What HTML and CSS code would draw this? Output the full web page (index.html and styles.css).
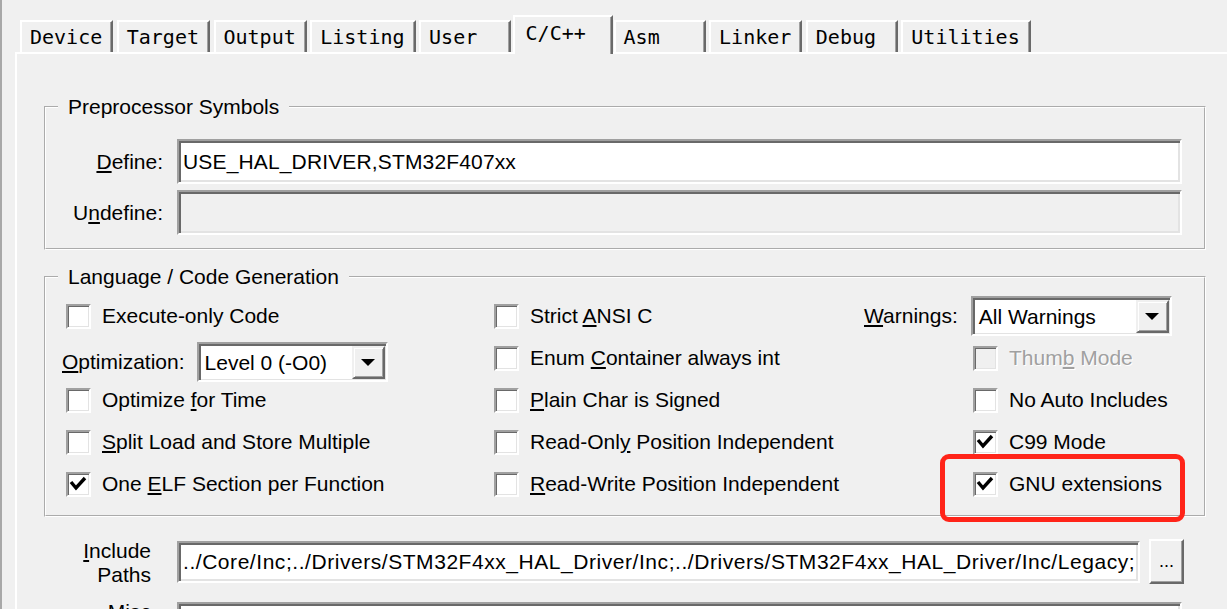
FILE: index.html
```html
<!DOCTYPE html>
<html lang="en">
<head>
<meta charset="utf-8">
<title>Options for Target - C/C++</title>
<link rel="stylesheet" href="styles.css">
</head>
<body>
<div class="window">
  <div class="tabs">
    <div class="tab">Device</div>
    <div class="tab">Target</div>
    <div class="tab">Output</div>
    <div class="tab">Listing</div>
    <div class="tab">User</div>
    <div class="tab active">C/C++</div>
    <div class="tab">Asm</div>
    <div class="tab">Linker</div>
    <div class="tab">Debug</div>
    <div class="tab">Utilities</div>
  </div>

  <div class="panel">
    <fieldset class="group group-pre">
      <legend>Preprocessor Symbols</legend>
      <div class="field-row">
        <span class="field-label"><u>D</u>efine:</span>
        <div class="textbox wide">USE_HAL_DRIVER,STM32F407xx</div>
      </div>
      <div class="field-row">
        <span class="field-label">U<u>n</u>define:</span>
        <div class="textbox wide readonly"></div>
      </div>
    </fieldset>

    <fieldset class="group group-lang">
      <legend>Language / Code Generation</legend>
      <div class="opts">
        <div class="opt first-col"><span class="cb"></span><span>Execute-only Code</span></div>
        <div class="opt opt-combo"><span><u>O</u>ptimization:</span>
          <div class="combo combo-opt"><span class="combo-text">Level 0 (-O0)</span><span class="combo-btn"><span class="arrow"></span></span></div>
        </div>
        <div class="opt first-col"><span class="cb"></span><span>Optimize <u>f</u>or Time</span></div>
        <div class="opt first-col"><span class="cb"></span><span><u>S</u>plit Load and Store Multiple</span></div>
        <div class="opt first-col"><span class="cb checked"><svg viewBox="0 0 21 21" width="21" height="21"><polyline points="3,8 8,14 17,4" fill="none" stroke="#000" stroke-width="3.4"/></svg></span><span>One <u>E</u>LF Section per Function</span></div>

        <div class="opt"><span class="cb"></span><span>Strict <u>A</u>NSI C</span></div>
        <div class="opt"><span class="cb"></span><span>Enum <u>C</u>ontainer always int</span></div>
        <div class="opt"><span class="cb"></span><span><u>P</u>lain Char is Signed</span></div>
        <div class="opt"><span class="cb"></span><span>Read-Onl<u>y</u> Position Independent</span></div>
        <div class="opt"><span class="cb"></span><span><u>R</u>ead-Write Position Independent</span></div>

        <div class="opt opt-combo"><span><u>W</u>arnings:</span>
          <div class="combo combo-warn"><span class="combo-text">All Warnings</span><span class="combo-btn"><span class="arrow"></span></span></div>
        </div>
        <div class="opt third-col disabled"><span class="cb"></span><span>Thum<u>b</u> Mode</span></div>
        <div class="opt third-col"><span class="cb"></span><span>No Auto Includes</span></div>
        <div class="opt third-col"><span class="cb checked"><svg viewBox="0 0 21 21" width="21" height="21"><polyline points="3,8 8,14 17,4" fill="none" stroke="#000" stroke-width="3.4"/></svg></span><span>C99 Mode</span></div>
        <div class="opt third-col"><span class="cb checked"><svg viewBox="0 0 21 21" width="21" height="21"><polyline points="3,8 8,14 17,4" fill="none" stroke="#000" stroke-width="3.4"/></svg></span><span>GNU extensions</span></div>
      </div>
    </fieldset>

    <div class="path-row">
      <span class="path-label"><u>I</u>nclude<br>Paths</span>
      <div class="textbox path">../Core/Inc;../Drivers/STM32F4xx_HAL_Driver/Inc;../Drivers/STM32F4xx_HAL_Driver/Inc/Legacy;</div>
      <div class="browse">...</div>
    </div>
    <div class="path-row">
      <span class="path-label">Misc<br>Controls</span>
      <div class="textbox path-wide"></div>
    </div>
  </div>

  <div class="highlight"></div>
</div>
</body>
</html>
```

FILE: styles.css
```css
html, body {
  margin: 0;
  padding: 0;
}

body {
  width: 1227px;
  height: 609px;
  overflow: hidden;
  background: #f0f0f0;
  color: #000;
  font-family: "Liberation Sans", Arial, sans-serif;
  font-size: 21px;
  line-height: 24px;
}

.window {
  position: relative;
  height: 609px;
  box-sizing: border-box;
  border-left: 2px solid #a8a8a8;
}

/* ---------- tabs ---------- */
.tabs {
  display: flex;
  align-items: flex-end;
  height: 52px;
  padding-left: 18px;
}

.tab {
  font-family: "DejaVu Sans Mono", "Liberation Mono", monospace;
  font-size: 20px;
  line-height: 24px;
  height: 32px;
  min-width: 92px;
  box-sizing: border-box;
  padding: 3px 9px 3px 8px;
  border-top: 2px solid #fff;
  border-left: 2px solid #fff;
  border-right: 2px solid #696969;
  box-shadow: inset -1px 0 0 #a0a0a0;
  margin-right: 3.5px;
  white-space: pre;
  background: #f0f0f0;
}

.tab.active {
  height: 39px;
  min-width: 100px;
  padding-top: 4px;
  padding-left: 11px;
  margin: 0 1px -2px -2px;
  position: relative;
  z-index: 1;
}

/* ---------- panel ---------- */
.panel {
  margin-left: 13px;
  border-top: 2px solid #fff;
  border-left: 2px solid #fff;
  padding: 41px 0 0 27px;
}

.group {
  margin: 0;
  width: 1162px;
  box-sizing: border-box;
  border: 2px groove #fff;
  min-inline-size: 0;
}

.group legend {
  margin-left: 12px;
  padding: 0 10px;
  line-height: 24px;
}

.group-pre {
  padding: 20px 0 13px 0;
}

.group-lang {
  margin-top: 15px;
  padding: 6px 0 10px 0;
}

/* ---------- text fields ---------- */
.field-row {
  display: flex;
  align-items: center;
}

.field-row + .field-row {
  margin-top: 6px;
}

.field-label {
  width: 117px;
  margin-right: 14px;
  text-align: right;
}

.textbox {
  height: 45px;
  box-sizing: border-box;
  background: #fff;
  border: 2px solid;
  border-color: #a0a0a0 #fff #fff #a0a0a0;
  box-shadow: inset 2px 2px 0 #696969, inset -2px -2px 0 #e3e3e3;
  padding: 0 4px;
  line-height: 41px;
  white-space: nowrap;
  overflow: hidden;
}

.textbox.wide {
  width: 1005px;
  letter-spacing: 0.15px;
}

.textbox.readonly {
  background: #f0f0f0;
}

/* ---------- options grid ---------- */
.opts {
  display: grid;
  grid-template-columns: 432px 370px 1fr;
  grid-template-rows: repeat(5, 42px);
  grid-auto-flow: column;
  margin-left: 16px;
}

.opt {
  display: flex;
  align-items: center;
  white-space: nowrap;
}

.opt.first-col {
  padding-left: 4px;
}

.opt.third-col {
  padding-left: 109px;
}

.opt-combo {
  gap: 12px;
}

.opts > .opt-combo:nth-child(2) {
  margin-top: 8px;
}

.opts > .opt-combo:nth-child(11) {
  gap: 13px;
}

.cb {
  flex: none;
  width: 25px;
  height: 25px;
  box-sizing: border-box;
  margin-right: 11px;
  background: #fff;
  border: 2px solid;
  border-color: #a0a0a0 #fff #fff #a0a0a0;
  box-shadow: inset 1px 1px 0 #696969, inset -1px -1px 0 #e3e3e3;
}

.cb svg {
  display: block;
}

.disabled .cb {
  background: #f0f0f0;
}

.disabled {
  color: #a0a0a0;
  text-shadow: 1px 1px 0 #fff;
}

/* ---------- combo boxes ---------- */
.combo {
  display: flex;
  align-items: center;
  height: 40px;
  box-sizing: border-box;
  background: #fff;
  border: 2px solid;
  border-color: #a0a0a0 #fff #fff #a0a0a0;
  box-shadow: inset 2px 2px 0 #696969, inset -1px -1px 0 #e3e3e3;
}

.combo-opt {
  width: 191px;
}

.combo-warn {
  width: 201px;
}

.combo-text {
  flex: 1;
  padding-left: 6px;
  padding-top: 2px;
}

.combo-btn {
  flex: none;
  width: 33px;
  height: 33px;
  margin-right: 1px;
  margin-top: 1px;
  box-sizing: border-box;
  background: #f0f0f0;
  border: 2px solid;
  border-color: #f0f0f0 #696969 #696969 #f0f0f0;
  box-shadow: inset 1px 1px 0 #fff, inset -1px -1px 0 #a0a0a0;
  display: flex;
  align-items: center;
  justify-content: center;
}

.arrow {
  width: 0;
  height: 0;
  border-left: 7px solid transparent;
  border-right: 7px solid transparent;
  border-top: 7px solid #000;
}

/* ---------- include paths ---------- */
.path-row {
  display: flex;
  align-items: flex-start;
  margin-top: 22px;
}

.path-row + .path-row {
  margin-top: 13px;
}

.path-label {
  width: 107px;
  margin-right: 26px;
  text-align: right;
  line-height: 24px;
}

.textbox.path {
  width: 963px;
  height: 42px;
  margin-top: 2px;
  line-height: 38px;
  letter-spacing: 0.55px;
}

.textbox.path-wide {
  width: 1005px;
  height: 42px;
  margin-top: 2px;
}

.browse {
  width: 35px;
  height: 45px;
  margin-left: 9px;
  box-sizing: border-box;
  background: #f0f0f0;
  border: 2px solid;
  border-color: #fff #696969 #696969 #fff;
  box-shadow: inset -1px -1px 0 #a0a0a0;
  text-align: center;
  line-height: 41px;
  font-size: 18px;
}

/* ---------- annotation ---------- */
.highlight {
  position: absolute;
  left: 938px;
  top: 454px;
  width: 245px;
  height: 68px;
  box-sizing: border-box;
  border: 5px solid #ff2419;
  border-radius: 9px;
}
```
